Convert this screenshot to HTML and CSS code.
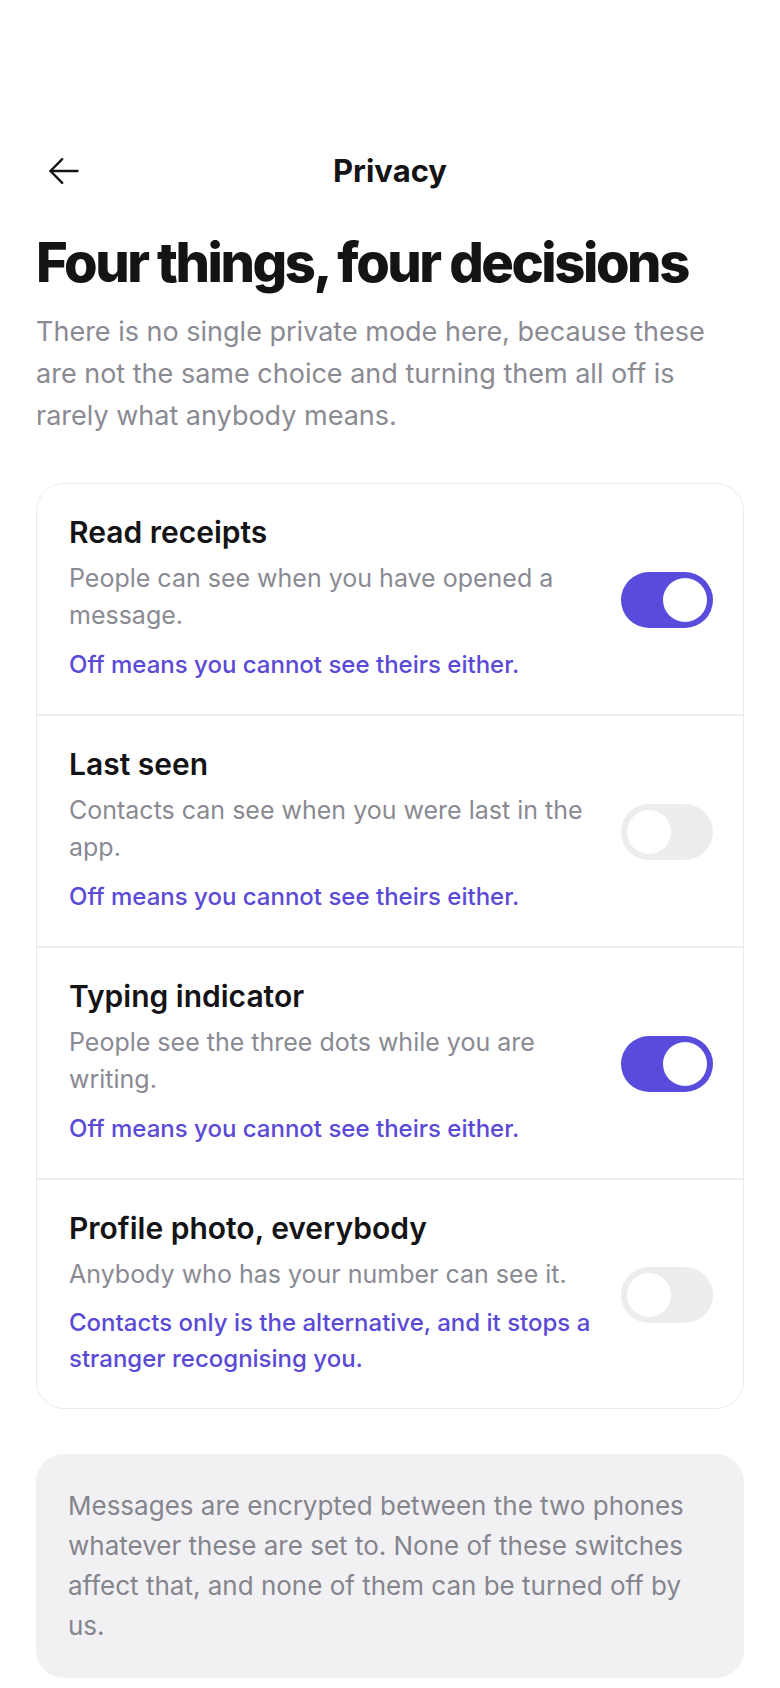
FILE: index.html
```html
<!DOCTYPE html>
<html lang="en">
<head>
<meta charset="utf-8">
<meta name="viewport" content="width=device-width, initial-scale=1">
<title>Privacy</title>
<link rel="stylesheet" href="styles.css">
</head>
<body>
<main class="page">
  <header class="topbar">
    <button class="back" aria-label="Back">
      <svg width="32" height="32" viewBox="0 0 32 32" fill="none" stroke="currentColor" stroke-width="2.4" stroke-linecap="round" stroke-linejoin="round">
        <path d="M29.5 16H2.5"/>
        <path d="M14.2 4.2L2.5 16l11.7 11.8"/>
      </svg>
    </button>
    <h2 class="topbar-title">Privacy</h2>
    <span class="topbar-spacer"></span>
  </header>

  <h1 class="heading">Four things, four decisions</h1>
  <p class="lead">There is no single private mode here, because these are not the same choice and turning them all off is rarely what anybody means.</p>

  <section class="card">
    <div class="row">
      <div class="text">
        <h3 class="title">Read receipts</h3>
        <p class="desc">People can see when you have opened a message.</p>
        <p class="hint">Off means you cannot see theirs either.</p>
      </div>
      <span class="toggle on"><span class="knob"></span></span>
    </div>
    <div class="row">
      <div class="text">
        <h3 class="title">Last seen</h3>
        <p class="desc">Contacts can see when you were last in the app.</p>
        <p class="hint">Off means you cannot see theirs either.</p>
      </div>
      <span class="toggle"><span class="knob"></span></span>
    </div>
    <div class="row">
      <div class="text">
        <h3 class="title">Typing indicator</h3>
        <p class="desc">People see the three dots while you are writing.</p>
        <p class="hint">Off means you cannot see theirs either.</p>
      </div>
      <span class="toggle on"><span class="knob"></span></span>
    </div>
    <div class="row">
      <div class="text">
        <h3 class="title">Profile photo, everybody</h3>
        <p class="desc">Anybody who has your number can see it.</p>
        <p class="hint">Contacts only is the alternative, and it stops a stranger recognising you.</p>
      </div>
      <span class="toggle"><span class="knob"></span></span>
    </div>
  </section>

  <aside class="note">
    <p>Messages are encrypted between the two phones whatever these are set to. None of these switches affect that, and none of them can be turned off by us.</p>
  </aside>
</main>
</body>
</html>
```

FILE: styles.css
```css
* {
  box-sizing: border-box;
}

html, body {
  margin: 0;
  padding: 0;
  background: #ffffff;
}

body {
  font-family: Inter, "Noto Sans", "Liberation Sans", sans-serif;
  color: #141417;
  -webkit-font-smoothing: antialiased;
}

.page {
  padding: 143px 36px 40px;
}

.topbar {
  display: grid;
  grid-template-columns: 56px 1fr 56px;
  align-items: center;
  height: 56px;
}

.back {
  display: flex;
  align-items: center;
  justify-content: flex-start;
  padding: 0 0 0 12px;
  margin: 0;
  border: 0;
  background: none;
  color: #141417;
  height: 56px;
  width: 56px;
  cursor: pointer;
}

.back svg {
  display: block;
}

.topbar-title {
  margin: 0;
  text-align: center;
  font-size: 31px;
  font-weight: 700;
  line-height: 56px;
  color: #141417;
}

.heading {
  margin: 34px 0 0;
  font-size: 54.3px;
  font-weight: 800;
  line-height: 1.1;
  letter-spacing: -0.045em;
  color: #141417;
}

.lead {
  max-width: 684px;
  margin: 18px 0 0;
  font-size: 27px;
  line-height: 42px;
  color: #8a8a93;
}

.card {
  margin-top: 46px;
  border: 1px solid #ebebee;
  border-radius: 28px;
  background: #ffffff;
  overflow: hidden;
}

.row {
  display: flex;
  align-items: center;
  gap: 20px;
  padding: 30px 30px 31px 32px;
}

.row + .row {
  border-top: 2px solid #ededf0;
}

.text {
  flex: 1;
  min-width: 0;
}

.title {
  margin: 0;
  font-size: 30px;
  line-height: 36px;
  font-weight: 600;
  color: #141417;
}

.desc {
  margin: 10px 0 0;
  font-size: 25px;
  line-height: 37.5px;
  color: #8a8a93;
}

.hint {
  margin: 12px 0 0;
  font-size: 24px;
  line-height: 36px;
  font-weight: 500;
  color: #5a4ad6;
}

.toggle {
  position: relative;
  flex: none;
  width: 92px;
  height: 56px;
  margin-top: 4px;
  border-radius: 28px;
  background: #ededef;
}

.toggle.on {
  background: #594bdb;
}

.knob {
  position: absolute;
  top: 6px;
  left: 6px;
  width: 44px;
  height: 44px;
  border-radius: 50%;
  background: #ffffff;
}

.toggle.on .knob {
  left: 42px;
}

.note {
  margin-top: 45px;
  padding: 32px;
  border-radius: 28px;
  background: #f1f1f3;
}

.note p {
  margin: 0;
  font-size: 26px;
  line-height: 40px;
  color: #85858e;
}
```
